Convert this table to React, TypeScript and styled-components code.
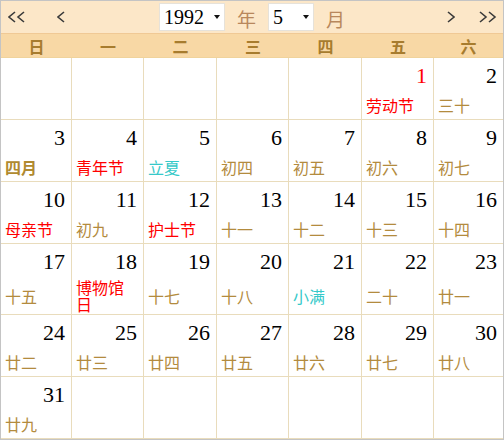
import React from "react";
import styled, { createGlobalStyle } from "styled-components";

const Global = createGlobalStyle`
  html, body { margin: 0; padding: 0; background: #fff; }
  body { font-family: "Noto Sans CJK SC", "Noto Sans", sans-serif; }
`;

const Frame = styled.div`
  width: 504px;
  height: 440px;
  box-sizing: border-box;
  border: 1px solid #c4c4c4;
  overflow: hidden;
  background: #fff;
`;

const Toolbar = styled.div`
  height: 32px;
  display: grid;
  grid-template-columns: 1fr auto 1fr;
  align-items: center;
  background: #fce7c8;
  border-bottom: 1px solid #f0c995;
`;

const NavGroup = styled.div<{ $side: "left" | "right" }>`
  display: flex;
  align-items: center;
  justify-content: ${(p) => (p.$side === "left" ? "flex-start" : "flex-end")};
  gap: ${(p) => (p.$side === "left" ? "31px" : "24px")};
  padding: ${(p) => (p.$side === "left" ? "0 0 0 7px" : "0 6px 0 0")};
`;

const NavButton = styled.button`
  border: 0;
  background: transparent;
  padding: 0;
  margin: 0;
  display: flex;
  align-items: center;
  cursor: pointer;
  color: #3a3a3a;
`;

const Center = styled.div`
  display: flex;
  align-items: center;
  gap: 12px;
`;

const SelectWrap = styled.div<{ $w: number }>`
  position: relative;
  width: ${(p) => p.$w}px;
  height: 28px;
`;

const Select = styled.select`
  appearance: none;
  -webkit-appearance: none;
  width: 100%;
  height: 100%;
  box-sizing: border-box;
  border: 1px solid #e6e2da;
  background: #fff;
  border-radius: 0;
  padding: 0 0 0 4px;
  font-family: "Liberation Serif", "DejaVu Serif", serif;
  font-size: 20px;
  color: #000;
  outline: none;
`;

const Caret = styled.span`
  position: absolute;
  right: 5px;
  top: 12px;
  width: 0;
  height: 0;
  border-left: 3.5px solid transparent;
  border-right: 3.5px solid transparent;
  border-top: 4px solid #111;
  pointer-events: none;
`;

const Unit = styled.span`
  font-family: "Noto Sans CJK SC", sans-serif;
  font-size: 19px;
  line-height: 28px;
  color: #b8875c;
  padding-top: 4px;
`;

const Grid = styled.div`
  display: grid;
  grid-template-columns: 71px 72px 73px 72px 73px 72px 1fr;
`;

const WeekHead = styled(Grid)`
  height: 23px;
  background: #f8d8a5;
  border-bottom: 1px solid #f0d39c;
`;

const WeekDay = styled.div`
  display: flex;
  align-items: center;
  justify-content: center;
  font-family: "Noto Sans CJK SC", sans-serif;
  font-size: 16px;
  font-weight: 700;
  color: #a77c2e;
`;

const Body = styled(Grid)`
  grid-auto-rows: minmax(62px, auto);
`;

const Cell = styled.div<{ $last: boolean }>`
  display: flex;
  flex-direction: column;
  border-right: ${(p) => (p.$last ? "0" : "1px solid #e9dcbc")};
  border-bottom: 1px solid #e9dcbc;
  min-width: 0;
`;

const DayNum = styled.div<{ $red: boolean }>`
  padding: 5px 6px 2px 0;
  line-height: 26px;
  height: 26px;
  text-align: right;
  font-family: "Liberation Serif", "DejaVu Serif", serif;
  font-size: 22px;
  color: ${(p) => (p.$red ? "#ff0000" : "#000")};
`;

type Tone = "lunar" | "month" | "holiday" | "term";

const toneColor: Record<Tone, string> = {
  lunar: "#b38b3e",
  month: "#b08a30",
  holiday: "#ff0000",
  term: "#36c9c9",
};

const Lunar = styled.div<{ $tone: Tone }>`
  flex: 1;
  display: flex;
  align-items: center;
  padding: 2px 6px 1px 4px;
  font-family: "Noto Sans CJK SC", sans-serif;
  font-size: 16px;
  line-height: 17px;
  font-weight: ${(p) => (p.$tone === "month" ? 700 : 400)};
  color: ${(p) => toneColor[p.$tone]};
`;

const Chevron = ({ dir, double }: { dir: "l" | "r"; double: boolean }) => {
  const one = (x: number) =>
    dir === "l"
      ? `${x + 6},1 ${x},6 ${x + 6},11`
      : `${x},1 ${x + 6},6 ${x},11`;
  const w = double ? 18 : 8;
  return (
    <svg width={w} height={12} viewBox={`0 0 ${w} 12`}>
      <polyline points={one(1)} fill="none" stroke="currentColor" strokeWidth={1.6} />
      {double && <polyline points={one(10)} fill="none" stroke="currentColor" strokeWidth={1.6} />}
    </svg>
  );
};

type Day = { d: number; text: string; tone: Tone; redNum?: boolean };

const days: Day[] = [
  { d: 1, text: "劳动节", tone: "holiday", redNum: true },
  { d: 2, text: "三十", tone: "lunar" },
  { d: 3, text: "四月", tone: "month" },
  { d: 4, text: "青年节", tone: "holiday" },
  { d: 5, text: "立夏", tone: "term" },
  { d: 6, text: "初四", tone: "lunar" },
  { d: 7, text: "初五", tone: "lunar" },
  { d: 8, text: "初六", tone: "lunar" },
  { d: 9, text: "初七", tone: "lunar" },
  { d: 10, text: "母亲节", tone: "holiday" },
  { d: 11, text: "初九", tone: "lunar" },
  { d: 12, text: "护士节", tone: "holiday" },
  { d: 13, text: "十一", tone: "lunar" },
  { d: 14, text: "十二", tone: "lunar" },
  { d: 15, text: "十三", tone: "lunar" },
  { d: 16, text: "十四", tone: "lunar" },
  { d: 17, text: "十五", tone: "lunar" },
  { d: 18, text: "博物馆日", tone: "holiday" },
  { d: 19, text: "十七", tone: "lunar" },
  { d: 20, text: "十八", tone: "lunar" },
  { d: 21, text: "小满", tone: "term" },
  { d: 22, text: "二十", tone: "lunar" },
  { d: 23, text: "廿一", tone: "lunar" },
  { d: 24, text: "廿二", tone: "lunar" },
  { d: 25, text: "廿三", tone: "lunar" },
  { d: 26, text: "廿四", tone: "lunar" },
  { d: 27, text: "廿五", tone: "lunar" },
  { d: 28, text: "廿六", tone: "lunar" },
  { d: 29, text: "廿七", tone: "lunar" },
  { d: 30, text: "廿八", tone: "lunar" },
  { d: 31, text: "廿九", tone: "lunar" },
];

const weekNames = ["日", "一", "二", "三", "四", "五", "六"];
const lead = 5;

export default function App() {
  const cells: (Day | null)[] = [
    ...Array.from({ length: lead }, () => null),
    ...days,
  ];
  while (cells.length % 7 !== 0) cells.push(null);

  return (
    <>
      <Global />
      <Frame>
        <Toolbar>
          <NavGroup $side="left">
            <NavButton aria-label="上一年"><Chevron dir="l" double /></NavButton>
            <NavButton aria-label="上一月"><Chevron dir="l" double={false} /></NavButton>
          </NavGroup>
          <Center>
            <SelectWrap $w={66}>
              <Select defaultValue="1992">
                <option value="1992">1992</option>
              </Select>
              <Caret />
            </SelectWrap>
            <Unit>年</Unit>
            <SelectWrap $w={46}>
              <Select defaultValue="5">
                <option value="5">5</option>
              </Select>
              <Caret />
            </SelectWrap>
            <Unit>月</Unit>
          </Center>
          <NavGroup $side="right">
            <NavButton aria-label="下一月"><Chevron dir="r" double={false} /></NavButton>
            <NavButton aria-label="下一年"><Chevron dir="r" double /></NavButton>
          </NavGroup>
        </Toolbar>
        <WeekHead>
          {weekNames.map((w) => (
            <WeekDay key={w}>{w}</WeekDay>
          ))}
        </WeekHead>
        <Body>
          {cells.map((c, i) => (
            <Cell key={i} $last={i % 7 === 6}>
              {c && (
                <>
                  <DayNum $red={!!c.redNum}>{c.d}</DayNum>
                  <Lunar $tone={c.tone}>{c.text}</Lunar>
                </>
              )}
            </Cell>
          ))}
        </Body>
      </Frame>
    </>
  );
}
